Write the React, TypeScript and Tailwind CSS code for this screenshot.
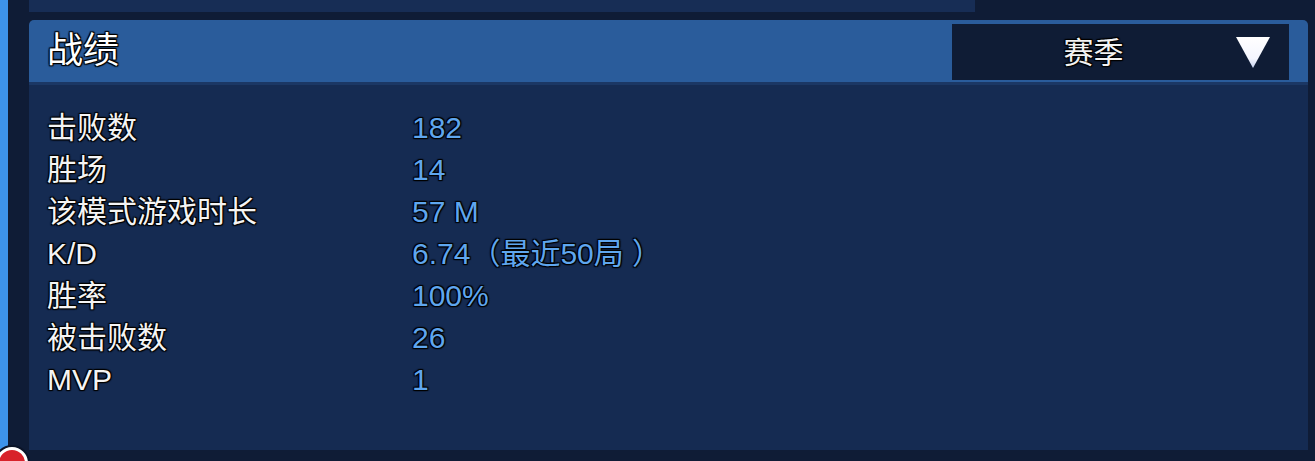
import React from 'react';

const stats: { label: string; value: string }[] = [
    { label: '击败数', value: '182' },
    { label: '胜场', value: '14' },
    { label: '该模式游戏时长', value: '57 M' },
    { label: 'K/D', value: '6.74（最近50局 ）' },
    { label: '胜率', value: '100%' },
    { label: '被击败数', value: '26' },
    { label: 'MVP', value: '1' },
];

const outline =
    '[text-shadow:0_0_2px_#000,1px_1px_1px_#000,-1px_-1px_1px_#000,1px_-1px_1px_#000,-1px_1px_1px_#000]';

export default function App() {
    return (
        <div
            className="relative flex h-[461px] w-[1315px] overflow-hidden bg-[#0f1c36]"
            style={{ fontFamily: '"Liberation Sans", "Noto Sans CJK SC", sans-serif' }}
        >
            {/* Left accent strip */}
            <div className="w-[8px] shrink-0 bg-[#3d93ea]" />
            <div className="w-[21px] shrink-0 bg-[#0f1c36]" />

            {/* Main column */}
            <div className="flex w-[1279px] shrink-0 flex-col">
                {/* Previous panel remnant */}
                <div className="h-[12px] w-[946px] bg-[#172d55]" />
                <div className="h-[8px]" />

                {/* Header */}
                <div className="flex h-[65px] items-start justify-between rounded-t-[5px] border-b-[3px] border-[#1b3764] bg-[#2a5c9b] pl-[18px] pr-[19px]">
                    <h2 className={`mt-[7px] text-[36px] leading-[48px] text-white ${outline}`}>
                        战绩
                    </h2>
                    <button className="mt-[4px] flex h-[56px] w-[337px] items-center bg-[#0f1c35]">
                        <span className={`flex-1 text-[30px] text-[#f2f2f2] ${outline}`}>
                            赛季
                        </span>
                        <svg
                            className="mr-[18px] h-[33px] w-[36px]"
                            viewBox="0 0 36 33"
                        >
                            <defs>
                                <linearGradient id="tri" x1="0" y1="0" x2="0" y2="1">
                                    <stop offset="0" stopColor="#ffffff" />
                                    <stop offset="0.7" stopColor="#f4f6ff" />
                                    <stop offset="1" stopColor="#c9d4f2" />
                                </linearGradient>
                            </defs>
                            <path d="M1 1 H35 L18 32 Z" fill="url(#tri)" />
                        </svg>
                    </button>
                </div>

                {/* Body */}
                <div className="flex h-[365px] flex-col bg-[#152b52] pl-[18px] pt-[21px]">
                    {stats.map((s) => (
                        <div key={s.label} className="flex h-[42px] items-center text-[30px]">
                            <span className={`w-[365px] shrink-0 text-[#f4f4f4] ${outline}`}>
                                {s.label}
                            </span>
                            <span className={`text-[#5fa6ee] ${outline}`}>{s.value}</span>
                        </div>
                    ))}
                </div>
            </div>

            {/* Bottom-left badge */}
            <div className="absolute left-[-4px] top-[447px] h-[32px] w-[32px] rounded-full border-[3px] border-white bg-[#d8222a] shadow-[0_0_0_2px_#0b1428]" />
        </div>
    );
}
